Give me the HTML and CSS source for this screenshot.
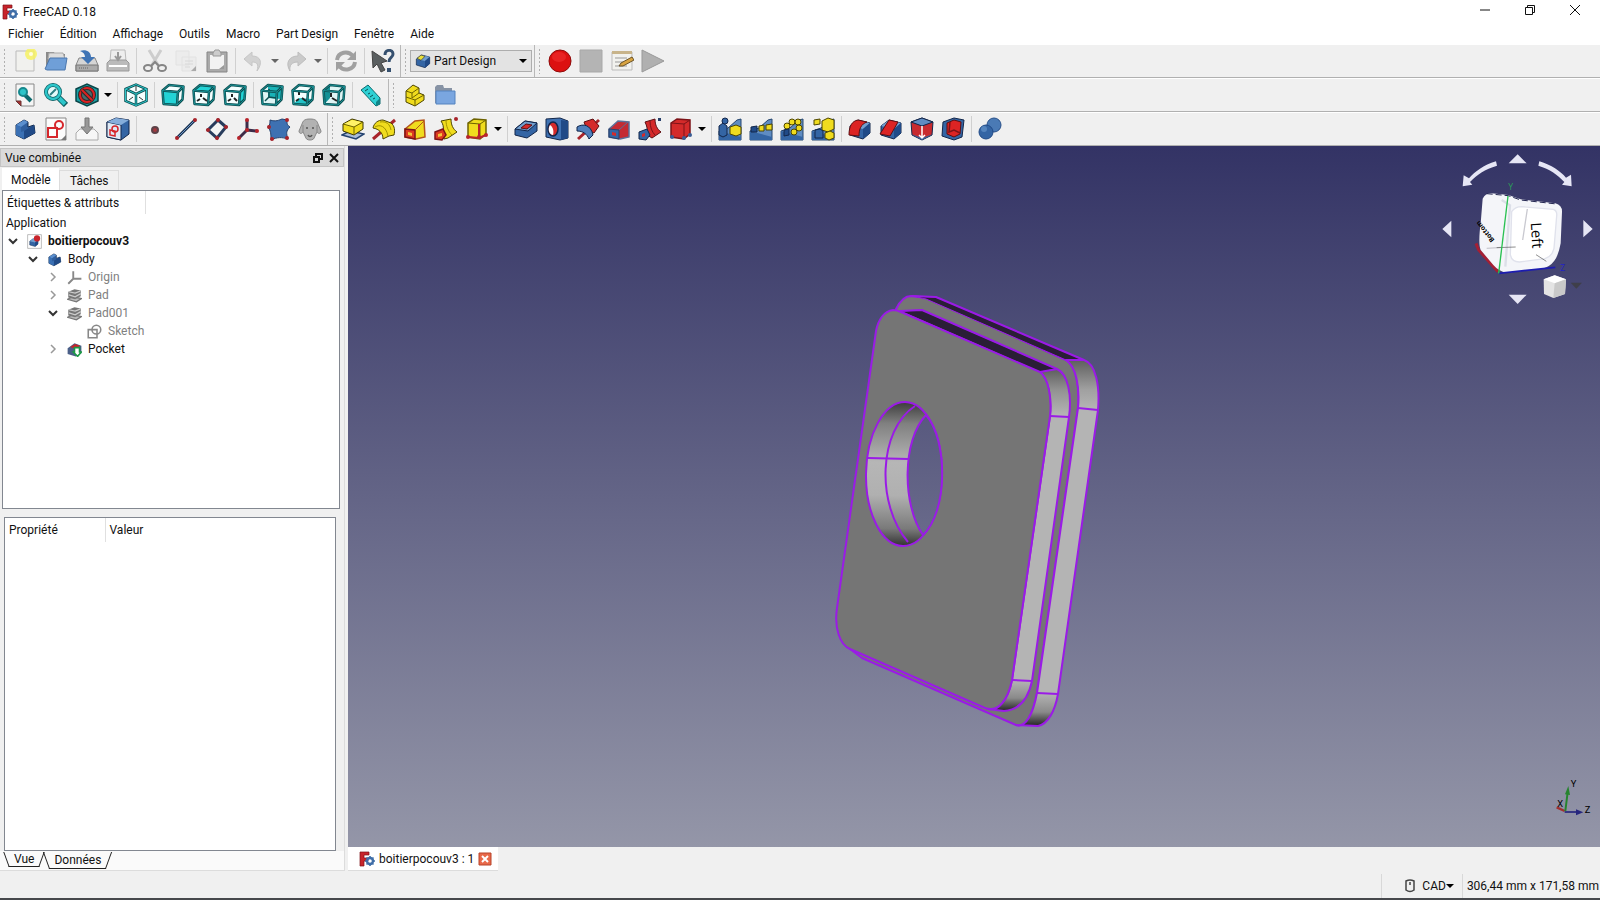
FILE: index.html
```html
<!DOCTYPE html>
<html lang="fr">

<head>
    <meta charset="UTF-8">
    <meta name="viewport" content="width=device-width, initial-scale=1.0">
    <title>FreeCAD 0.18</title>
    <link rel="stylesheet" href="styles.css">
</head>

<body>
    <!-- shared icon shapes -->
    <svg class="defs" width="0" height="0" aria-hidden="true">
        <symbol id="logo" viewBox="0 0 16 16">
            <path d="M1 1h9v3H5v3h4v3H5v5H1z" fill="#c8242b" stroke="#7c1318" stroke-width=".7" />
            <circle cx="11" cy="10" r="3" fill="none" stroke="#3f6ea8" stroke-width="2.4" />
            <path d="M11 5v2M11 13v2M6 10h2M14 10h2M7.500 6.500l1.500 1.500M13 12l1.500 1.500M14.500 6.500L13 8M9 12l-1.500 1.500" stroke="#3f6ea8" stroke-width="1.600" />
        </symbol>
        <symbol id="cube" viewBox="0 0 24 24">
            <g fill="none" stroke="#0c4f52" stroke-width="2.500" stroke-linejoin="round">
                <path d="M1.500 7.500L8 2l14.500 1.500-1 13L16 22 2.500 21zM1.500 7.500L17 9l5.500-5.500M17 9l-1 13" />
            </g>
            <path d="M1.500 7.500L8 2l14.500 1.500-1 13L16 22 2.500 21zM1.500 7.500L17 9l5.500-5.500M17 9l-1 13" fill="none" stroke="#1fa9ad" stroke-width=".7" />
        </symbol>
        <symbol id="body" viewBox="0 0 24 24">
            <path d="M3 8l8-5 4 2v5l6-2 1 8-11 6-8-4z" fill="#2f5f9f" stroke="#13294a" stroke-linejoin="round" />
            <path d="M3 8l8-5 4 2-7 5z" fill="#5b8fce" />
            <path d="M11 14l10-6 1 8-11 6z" fill="#204a87" />
            <path d="M3 8l5 2v5l3-1v8l-8-4z" fill="#3a70b4" />
        </symbol>
        <symbol id="pad" viewBox="0 0 24 24">
            <path d="M1 18l8-4 14 3-8 5z" fill="#a9bcd8" stroke="#23426f" stroke-width="1.500" />
            <path d="M2 7l9-5 11 3v7l-9 6-11-4z" fill="#f0dc1e" stroke="#3d3700" stroke-linejoin="round" />
            <path d="M3 7l8-4 9 2-7 5z" fill="#fff268" />
            <path d="M2 7l11 3 9-5M13 10v8" fill="none" stroke="#6d6200" />
        </symbol>
        <symbol id="padgrey" viewBox="0 0 24 24">
            <path d="M1 18l8-4 14 3-8 5z" fill="#bbb" stroke="#777" stroke-width="2" />
            <path d="M2 6l10-4 10 2v9l-9 5-11-3z" fill="#777" />
            <path d="M3 6l10 2 8-3M3 11l10 3 9-5" fill="none" stroke="#ccc" stroke-width="2" />
        </symbol>
        <symbol id="bluebox" viewBox="0 0 24 24">
            <path d="M2 9l8-6 12 3v10l-7 6-13-4z" fill="#3465a4" stroke="#12264a" stroke-linejoin="round" />
            <path d="M2 9l8-6 12 3-7 6z" fill="#729fcf" />
            <path d="M15 12l7-6v10l-7 6z" fill="#204a87" />
        </symbol>
        <symbol id="ramp" viewBox="0 0 24 24">
            <path d="M1 23V14l9-3L19 3l4-1v21z" fill="#5f8cc2" stroke="#26466f" />
            <path d="M1 14l22 6v3H1z" fill="#3465a4" />
        </symbol>
        <symbol id="down" viewBox="0 0 8 8">
            <path d="M0 2h8L4 6z" />
        </symbol>
        <symbol id="open" viewBox="0 0 12 12">
            <path d="M2 4l4 4 4-4" fill="none" stroke="#333" stroke-width="2" />
        </symbol>
        <symbol id="closed" viewBox="0 0 12 12">
            <path d="M4 2l4 4-4 4" fill="none" stroke="#999" stroke-width="1.500" />
        </symbol>
    </svg>

    <header class="titlebar">
        <svg class="logo" aria-hidden="true"><use href="#logo" /></svg>
        <h1>FreeCAD 0.18</h1>
        <div class="winbtns">
            <button aria-label="Réduire"><svg viewBox="0 0 12 12"><path d="M1 6h10" /></svg></button>
            <button aria-label="Restaurer"><svg viewBox="0 0 12 12"><path d="M1.500 3.500h7v7h-7zM3.500 3.500v-2h7v7h-2" /></svg></button>
            <button aria-label="Fermer"><svg viewBox="0 0 12 12"><path d="M1 1l10 10M11 1L1 11" /></svg></button>
        </div>
    </header>

    <nav class="menubar">
        <button>Fichier</button>
        <button>Édition</button>
        <button>Affichage</button>
        <button>Outils</button>
        <button>Macro</button>
        <button>Part Design</button>
        <button>Fenêtre</button>
        <button>Aide</button>
    </nav>

    <div class="toolrow">
        <div class="toolbar">
            <button class="tool" aria-label="Nouveau"><svg viewBox="0 0 24 24"><path d="M3 2h18v20H3z" fill="#f1f1ee" stroke="#bbb" /><circle cx="18" cy="5" r="6" fill="#f7f25a" opacity=".8" /><circle cx="18" cy="5" r="2" fill="#fffde0" /></svg></button>
            <button class="tool" aria-label="Ouvrir"><svg viewBox="0 0 24 24"><path d="M2 20V3h8l1 2h10v15z" fill="#8a8a8a" /><path d="M5 4h14l2 6H4z" fill="#ddd" stroke="#aaa" /><path d="M1 20l5-11h17l-2 12H3z" fill="#6f9fd8" stroke="#4a76ad" /></svg></button>
            <button class="tool" aria-label="Enregistrer"><svg viewBox="0 0 24 24"><path d="M4 9h16l3 7v6H1v-6z" fill="#d5d5d5" stroke="#888" /><path d="M1 16h22v6H1z" fill="#aaa" stroke="#777" /><path d="M5 2c6-2 11 1 11 6h4l-7 7-7-7h4c0-3-2-5-5-6z" fill="#3f74b5" /><path d="M4 19h10" stroke="#666" stroke-dasharray="1 1" /></svg></button>
            <button class="tool" aria-label="Imprimer"><svg viewBox="0 0 24 24"><path d="M5 1h14l1 11H4z" fill="#eee" stroke="#bbb" /><path d="M1 14l3-3h16l3 3v8H1z" fill="#bbb" stroke="#999" /><path d="M12 3v7M9 7l3 4 3-4" stroke="#999" stroke-width="2" fill="none" /><path d="M3 17h18" stroke="#fff" stroke-width="2" /></svg></button>
            <span class="sep"></span>
            <button class="tool" aria-label="Couper"><svg viewBox="0 0 24 24"><path d="M6 1l9 15M18 1L9 16" stroke="#cdcdcd" stroke-width="3" /><g fill="none" stroke="#858585" stroke-width="2"><ellipse cx="5" cy="19" rx="4" ry="3" /><ellipse cx="19" cy="19" rx="4" ry="3" /><path d="M8 17l4-4 4 4" /></g></svg></button>
            <button class="tool" aria-label="Copier"><svg viewBox="0 0 24 24"><path d="M2 2h13v14H2zM8 8h14v14H8z" fill="#ececec" stroke="#e2e2e2" /><path d="M11 12h8M11 15h8M11 18h5" stroke="#d8d8d8" /><path d="M22 17v5h-5z" fill="#aaa" /></svg></button>
            <button class="tool" aria-label="Coller"><svg viewBox="0 0 24 24"><path d="M2 3h20v20H2z" fill="#aaa" stroke="#858585" /><path d="M5 6h14v14H5z" fill="#f2f2f2" /><path d="M8 4l2-3h4l2 3v3H8z" fill="#ccc" stroke="#999" /><path d="M19 16v4h-5z" fill="#999" /></svg></button>
            <span class="sep"></span>
            <button class="tool" aria-label="Annuler"><svg viewBox="0 0 24 24"><path d="M2 10l8-7v4c9 0 11 7 5 15 2-7 0-9-5-9v4z" fill="#d2d2d2" stroke="#c6c6c6" /></svg></button>
            <button class="drop" aria-label="Liste des annulations"><svg class="grey"><use href="#down" /></svg></button>
            <button class="tool" aria-label="Rétablir"><svg viewBox="0 0 24 24"><path d="M21 10l-8-7v4c-9 0-13 7-8 15-1-6 2-9 8-9v4z" fill="#cacaca" stroke="#bdbdbd" /></svg></button>
            <button class="drop" aria-label="Liste des rétablissements"><svg class="grey"><use href="#down" /></svg></button>
            <span class="sep"></span>
            <button class="tool" aria-label="Rafraîchir"><svg viewBox="0 0 24 24"><g fill="none" stroke="#a0a0a0" stroke-width="4"><path d="M3 11c1-8 11-10 16-4M21 13c-1 8-11 10-16 4" /></g><path d="M22 2v9h-9zM2 22v-9h9z" fill="#a0a0a0" /></svg></button>
            <span class="sep"></span>
            <button class="tool" aria-label="Qu'est-ce que c'est ?"><svg viewBox="0 0 24 24"><path d="M1 2l15 10-6 2 4 7-4 2-4-8-4 4z" fill="#5a5f60" stroke="#444" /><path d="M14 6c0-6 8-6 8-1 0 4-4 3-4 8" fill="none" stroke="#35506f" stroke-width="3" /><path d="M16 19h4v4h-4z" fill="#35506f" /></svg></button>
        </div>
        <div class="toolbar">
            <label class="workbench" aria-label="Atelier">
                <svg class="wbicon" viewBox="0 0 24 24"><use href="#bluebox" /><path d="M3 8l6-5 6 2-6 6z" fill="#e8e03a" stroke="#333" /></svg>
                <select>
                    <option>Part Design</option>
                </select>
                <svg class="wbarrow"><use href="#down" /></svg>
            </label>
        </div>
        <div class="toolbar">
            <button class="tool" aria-label="Enregistrer une macro"><svg viewBox="0 0 24 24"><circle cx="12" cy="12" r="11" fill="#dc1010" stroke="#8f0b0b" /><ellipse cx="11" cy="8" rx="7" ry="5" fill="#f03030" opacity=".6" /></svg></button>
            <button class="tool" aria-label="Arrêter la macro"><svg viewBox="0 0 24 24"><path d="M1 1h22v22H1z" fill="#b4b4b4" stroke="#a8a8a8" /></svg></button>
            <button class="tool" aria-label="Macros"><svg viewBox="0 0 24 24"><path d="M2 3h20v18H2z" fill="#f2f2ee" stroke="#bbb" /><path d="M2 2h20v3H2z" fill="#c8b48a" /><path d="M5 9h12M5 13h8M5 17h12" stroke="#999" /><path d="M9 17l2-3 11-6 2 3-11 6z" fill="#d9a441" stroke="#6b5326" /></svg></button>
            <button class="tool" aria-label="Exécuter la macro"><svg viewBox="0 0 24 24"><path d="M1 1l22 11L1 23z" fill="#b0b0b0" stroke="#999" /></svg></button>
        </div>
    </div>

    <div class="toolrow">
        <div class="toolbar">
            <button class="tool" aria-label="Tout afficher"><svg viewBox="0 0 24 24"><path d="M3 1h18v22H8l-5-5z" fill="#f5f5f5" stroke="#888" /><path d="M3 18h5v5z" fill="#a33" stroke="#633" /><path d="M12 12l6 6" stroke="#0c6a6e" stroke-width="4" /><circle cx="10" cy="9" r="4" fill="#2cc5c9" stroke="#16888d" stroke-width="2" /></svg></button>
            <button class="tool" aria-label="Ajuster à la sélection"><svg viewBox="0 0 24 24"><path d="M14 14l8 8" stroke="#0c5c60" stroke-width="6" /><path d="M14 14l7 7" stroke="#2cc5c9" stroke-width="4" /><circle cx="9" cy="9" r="7" fill="#e4fbfb" stroke="#0c5c60" stroke-width="4" /><circle cx="9" cy="9" r="7" fill="none" stroke="#2cc5c9" stroke-width="2.500" /><path d="M6 12l6-6" stroke="#2b7e82" stroke-width="2" /></svg></button>
            <button class="tool" aria-label="Style de représentation"><svg viewBox="0 0 24 24"><path d="M1 6l11-5 11 5v12l-11 5-11-5z" fill="#1aa0a5" stroke="#0a4548" stroke-width="1.500" /><circle cx="12" cy="12" r="7" fill="#4c6a6d" stroke="#2a2a2a" stroke-width="4" /><circle cx="12" cy="12" r="7" fill="none" stroke="#d22" stroke-width="2" /><path d="M7 7l10 10" stroke="#2a2a2a" stroke-width="4" /><path d="M7 7l10 10" stroke="#d22" stroke-width="2" /></svg></button>
            <button class="drop" aria-label="Autres styles"><svg><use href="#down" /></svg></button>
            <span class="sep"></span>
            <button class="tool" aria-label="Axonométrique"><svg viewBox="0 0 24 24"><path d="M1.500 6L12 1.500 22.500 6v12L12 22.500 1.500 18z" fill="#f5ffff" /><path d="M1.500 6L12 1.500 22.500 6v12L12 22.500 1.500 18zM1.500 6L12 11l10.500-5M12 11v11.500" fill="none" stroke="#0c4f52" stroke-width="2.500" /><path d="M1.500 6L12 1.500 22.500 6v12L12 22.500 1.500 18zM1.500 6L12 11l10.500-5M12 11v11.500" fill="none" stroke="#2cc5c9" /><path d="M12 3v5M5 17l4-3M19 17l-4-3" stroke="#333" /></svg></button>
            <span class="sep"></span>
            <button class="tool" aria-label="Devant"><svg viewBox="0 0 24 24"><path d="M2 7l6-5 14 2-1 12-5 6z" fill="#f4ffff" /><path d="M1.500 7.500L17 9l-1 13-13.500-1z" fill="#23d3d6" /><use href="#cube" /></svg></button>
            <button class="tool" aria-label="Dessus"><svg viewBox="0 0 24 24"><path d="M2 7l15 2 5-5-1 12-5 6-14-1z" fill="#f4ffff" /><path d="M1.500 7.500L8 2l14.500 1.500L17 9z" fill="#23d3d6" /><path d="M5 18l3-2M9 14v-3M11 15l4 3" stroke="#222" stroke-width="2" /><use href="#cube" /></svg></button>
            <button class="tool" aria-label="Droite"><svg viewBox="0 0 24 24"><path d="M2 7l6-5 14 2-6 18-14-1z" fill="#f4ffff" /><path d="M17 9l5.500-5.500-1 13L16 22z" fill="#23d3d6" /><path d="M5 18l3-2M9 14v-3M11 15l3 3" stroke="#222" stroke-width="2" /><use href="#cube" /></svg></button>
            <span class="sep"></span>
            <button class="tool" aria-label="Derrière"><svg viewBox="0 0 24 24"><path d="M2 7l6-5 14 2-1 12-5 6-14-1z" fill="#dff5f5" /><path d="M8 2l14 2-1 12-13-1z" fill="#18b3b7" /><path d="M5 18l4-4V6M9 14l7 1" stroke="#0c4f52" stroke-width="1.500" fill="none" /><use href="#cube" /></svg></button>
            <button class="tool" aria-label="Dessous"><svg viewBox="0 0 24 24"><path d="M2 7l6-5 14 2-1 12-5 6-14-1z" fill="#f4ffff" /><path d="M2.500 21L8 15l13 1-5 6z" fill="#23c3c7" /><path d="M8 12V7M5 18l3-2M11 15l4 3" stroke="#222" stroke-width="2" /><use href="#cube" /></svg></button>
            <button class="tool" aria-label="Gauche"><svg viewBox="0 0 24 24"><path d="M2 7l6-5 14 2-1 12-5 6-14-1z" fill="#dff5f5" /><path d="M1.500 7.500L8 2v13l-5.500 6z" fill="#159196" /><path d="M9 14v-4M10 15l5 3" stroke="#222" stroke-width="2" /><use href="#cube" /></svg></button>
            <span class="sep"></span>
            <button class="tool" aria-label="Mesurer une distance"><svg viewBox="0 0 24 24"><path d="M2 7l7-5 12 13v6l-4 2z" fill="#2ed0d4" stroke="#0c6a6e" /><path d="M17 19v4l4-2v-6" fill="#128488" /><path d="M6 8l3-2M9 11l2-1M11 14l3-2M14 16l2-1" stroke="#0c4f52" /></svg></button>
        </div>
        <div class="toolbar">
            <button class="tool" aria-label="Créer une pièce"><svg viewBox="0 0 24 24"><path d="M4 8l7-6 6 3v5l5 2v5l-9 6-9-4z" fill="#f0dc1e" stroke="#4d4500" stroke-linejoin="round" /><path d="M4 8l6 2 7-5M10 10v5l7-5M4 14l9 3 9-5M13 17v6" fill="none" stroke="#6d6200" /></svg></button>
            <button class="tool" aria-label="Créer un groupe"><svg viewBox="0 0 24 24"><path d="M2 4l2-2h6l1 3h8v15H2z" fill="#8793a5" /><path d="M3 8h19v13H3z" fill="#7aa6e0" stroke="#5583bf" /></svg></button>
        </div>
    </div>

    <div class="toolrow">
        <div class="toolbar">
            <button class="tool" aria-label="Créer un corps"><svg><use href="#body" /></svg></button>
            <button class="tool" aria-label="Créer une esquisse"><svg viewBox="0 0 24 24"><path d="M2 1h20v22H2z" fill="#fbfbfb" stroke="#888" /><g fill="none" stroke="#d6262b" stroke-width="2"><path d="M4 11h9v9H4z" /><circle cx="15" cy="8" r="4" /></g><path d="M22 18v5h-5z" fill="#777" /></svg></button>
            <button class="tool" aria-label="Éditer l'esquisse"><svg viewBox="0 0 24 24"><path d="M5 12h14l4 4v7H1v-7z" fill="#f7f7f7" stroke="#aaa" /><path d="M10 1h4v9h4l-6 7-6-7h4z" fill="#999" stroke="#777" /></svg></button>
            <button class="tool" aria-label="Appliquer une esquisse"><svg viewBox="0 0 24 24"><path d="M1 5l9-4 13 2v14l-8 6L1 20z" fill="#3465a4" stroke="#12264a" /><path d="M1 5l14 3v15L1 20z" fill="#dfe9f5" stroke="#12264a" /><path d="M1 5l9-4 13 2-8 5z" fill="#86aedb" /><path d="M4 13l5 1v5l-5-1z" fill="none" stroke="#d6262b" stroke-width="1.500" /><circle cx="9" cy="12" r="3" fill="none" stroke="#d6262b" stroke-width="1.500" /></svg></button>
            <span class="sep"></span>
            <button class="tool" aria-label="Point de référence"><svg viewBox="0 0 24 24"><circle cx="12" cy="13" r="3" fill="#a03a40" stroke="#5d4248" stroke-width="2" /></svg></button>
            <button class="tool" aria-label="Ligne de référence"><svg viewBox="0 0 24 24"><path d="M3 21L21 3" stroke="#17304f" stroke-width="3" /><path d="M3 21L21 3" stroke="#6d97c8" /><circle cx="3" cy="21" r="2" fill="#a8242b" /><circle cx="21" cy="3" r="2" fill="#a8242b" /></svg></button>
            <button class="tool" aria-label="Plan de référence"><svg viewBox="0 0 24 24"><path d="M13 3l8 7-9 11-9-8z" fill="#f4f4f4" stroke="#283c5c" stroke-width="3" /><g fill="#a8242b"><circle cx="13" cy="3" r="2" /><circle cx="21" cy="10" r="2" /><circle cx="12" cy="21" r="2" /><circle cx="3" cy="13" r="2" /></g></svg></button>
            <button class="tool" aria-label="Système de coordonnées local"><svg viewBox="0 0 24 24"><path d="M11 13V3M11 13l10 1M11 13l-8 8" stroke="#3d2c48" stroke-width="3" /><g fill="#b8242b"><circle cx="11" cy="3" r="2" /><circle cx="21" cy="14" r="2" /><circle cx="3" cy="21" r="2" /><circle cx="11" cy="13" r="2" /></g></svg></button>
            <button class="tool" aria-label="Forme liée"><svg viewBox="0 0 24 24"><path d="M3 3c6 2 9 0 12-1l5 1c0 4 0 5 3 7-4 4-4 6-2 12-6-2-11-2-17 1 0-6 0-9-3-13 2-2 2-4 2-7z" fill="#3e71b2" stroke="#23426f" /><g fill="#a8242b"><circle cx="20" cy="3" r="2" /><circle cx="2" cy="10" r="2" /><circle cx="20" cy="21" r="2" /><circle cx="5" cy="22" r="2" /></g></svg></button>
            <button class="tool" aria-label="Cloner"><svg viewBox="0 0 24 24"><path d="M12 2c6 0 7 2 8 5l3 7c0 3-3 3-4 1l-2 4c-1 3-2 4-5 4s-4-1-5-4l-2-4c-1 2-4 2-4-1l3-7c1-3 2-5 8-5z" fill="#b2b2b2" stroke="#888" /><path d="M5 8v7M19 8v7" stroke="#888" /><path d="M9 10v2M15 10v2M10 18c1 2 3 2 4 0" stroke="#555" stroke-width="1.500" fill="none" /></svg></button>
        </div>
        <div class="toolbar">
            <button class="tool" aria-label="Protrusion"><svg><use href="#pad" /></svg></button>
            <button class="tool" aria-label="Révolution"><svg viewBox="0 0 24 24"><path d="M1 22L23 3" stroke="#a8242b" stroke-width="3" /><path d="M1 11c1-5 5-8 10-8l8 3c4 3 4 8 3 12l-5 1-6 3c0-6-4-10-10-11z" fill="#f0dc1e" stroke="#4d4500" /><path d="M3 10c5-3 11-1 13 9M8 5c6-1 10 2 11 8" fill="none" stroke="#a39300" /></svg></button>
            <button class="tool" aria-label="Lissage additif"><svg viewBox="0 0 24 24"><path d="M2 12l10-8 9-1 1 17-9 2-11-2z" fill="#f0dc1e" stroke="#b3541c" stroke-width="1.500" /><path d="M2 12l10 1v9l-10-2z" fill="#dc3a20" stroke="#7c1318" stroke-width="1.500" /><path d="M5 15l4 1v3l-4-1z" fill="#f4c43a" /><path d="M12 13l9-9" stroke="#b3541c" /></svg></button>
            <button class="tool" aria-label="Balayage additif"><svg viewBox="0 0 24 24"><path d="M7 4l10-2c0 6 2 10 6 13l-9 6-4 1-1-8c1-4 0-7-2-10z" fill="#f0dc1e" stroke="#4d4500" /><path d="M12 3c0 6 2 11 6 15" fill="none" stroke="#a39300" /><path d="M1 15l8-3 3 6-4 5-7-1z" fill="#dc3a20" stroke="#7c1318" stroke-width="1.500" /><path d="M4 17l4-1v3l-4 1z" fill="#f4c43a" /><circle cx="22" cy="2" r="2" fill="#a8242b" /></svg></button>
            <button class="tool" aria-label="Primitive additive"><svg viewBox="0 0 24 24"><path d="M3 6l6-4 12 1v14l-6 5-12-2z" fill="#f0dc1e" stroke="#6d6200" stroke-width="1.500" /><path d="M3 6l12 1 6-4M15 7v14" fill="none" stroke="#6d6200" /><path d="M14 7v13M3 20l11 1 7-3" stroke="#b8242b" stroke-width="2" fill="none" /><g fill="#b8242b"><circle cx="3" cy="20" r="2" /><circle cx="14" cy="20" r="2" /><circle cx="21" cy="18" r="2" /></g></svg></button>
            <button class="drop" aria-label="Autres primitives additives"><svg><use href="#down" /></svg></button>
            <span class="sep"></span>
            <button class="tool" aria-label="Cavité"><svg viewBox="0 0 24 24"><path d="M1 12l10-8 12 2v8L13 21 1 18z" fill="#3465a4" stroke="#12264a" stroke-linejoin="round" /><path d="M1 12l10-8 12 2-9 8z" fill="#729fcf" stroke="#12264a" /><path d="M7 11l5-4 6 1-5 4z" fill="#d42a2a" stroke="#5d0f12" /></svg></button>
            <button class="tool" aria-label="Perçage"><svg viewBox="0 0 24 24"><path d="M1 2l14-1 8 3v17l-8 2-14-3z" fill="#3f72b3" stroke="#12264a" /><path d="M16 3l7 1v17l-7 2z" fill="#204a87" /><ellipse cx="8" cy="12" rx="5" ry="7" fill="#d42a2a" stroke="#12264a" stroke-width="1.500" /><path d="M5 8c3 2 4 6 3 10-5-1-5-7-3-10z" fill="#fff" /></svg></button>
            <button class="tool" aria-label="Rainure"><svg viewBox="0 0 24 24"><path d="M2 22L23 3" stroke="#a8242b" stroke-width="3" /><path d="M8 5l9-3 6 7-5 7-7-3z" fill="#d42a2a" stroke="#5d0f12" /><path d="M1 10c6-4 14-2 16 8l-4 4c-2-5-6-8-12-8z" fill="#4f7fbb" stroke="#12264a" /></svg></button>
            <button class="tool" aria-label="Lissage soustractif"><svg viewBox="0 0 24 24"><path d="M2 12l9-8 11 1v15l-9 2-11-2z" fill="#c42a33" stroke="#5b6f98" stroke-width="1.500" /><path d="M2 12l10 1v9l-10-2z" fill="#3465a4" stroke="#28406b" /><path d="M5 15l4 1v3l-4-1z" fill="#d42a2a" /><path d="M12 13l9-8" stroke="#5b6f98" /></svg></button>
            <button class="tool" aria-label="Balayage soustractif"><svg viewBox="0 0 24 24"><path d="M7 5l10-3c0 6 2 10 6 13l-9 6-5-3c1-5 0-9-2-13z" fill="#d42a2a" stroke="#5d0f12" /><path d="M12 4c0 6 2 11 5 14" fill="none" stroke="#7c1318" /><path d="M1 15l8-3 3 6-4 5-7-1z" fill="#3465a4" stroke="#12264a" /><path d="M4 17l3-1v3l-3 1z" fill="#d42a2a" /><path d="M20 1h3v3h-3z" fill="#28406b" /></svg></button>
            <button class="tool" aria-label="Primitive soustractive"><svg viewBox="0 0 24 24"><path d="M2 6l6-4 13 1v14l-6 5-13-2z" fill="#d42a2a" stroke="#7c1318" stroke-width="1.500" /><path d="M2 6l13 1 6-4M15 7v14" fill="none" stroke="#7c1318" /><g fill="#3a5e95"><circle cx="3" cy="20" r="2" /><circle cx="15" cy="21" r="2" /><circle cx="21" cy="18" r="2" /></g></svg></button>
            <button class="drop" aria-label="Autres primitives soustractives"><svg><use href="#down" /></svg></button>
            <span class="sep"></span>
            <button class="tool" aria-label="Symétrie"><svg viewBox="0 0 24 24"><use href="#ramp" /><path d="M5 6l4 3v9l-4 2-4-2V9z" fill="#3465a4" stroke="#12264a" /><circle cx="7" cy="4" r="3" fill="#3465a4" stroke="#12264a" /><path d="M12 10l6-2 5 2v7l-5 2-6-2z" fill="#f0dc1e" stroke="#4d4500" /></svg></button>
            <button class="tool" aria-label="Répétition linéaire"><svg viewBox="0 0 24 24"><use href="#ramp" /><path d="M2 10l6-1v6H2z" fill="#204a87" stroke="#12264a" /><path d="M10 9l5-1v6h-5zM17 8l6-1v6h-6z" fill="#f0dc1e" stroke="#4d4500" /></svg></button>
            <button class="tool" aria-label="Répétition circulaire"><svg viewBox="0 0 24 24"><use href="#ramp" /><g fill="#f0dc1e" stroke="#4d4500"><circle cx="12" cy="5" r="3" /><circle cx="18" cy="5" r="3" /><circle cx="7" cy="9" r="3" /><circle cx="19" cy="11" r="3" /><circle cx="14" cy="15" r="3" /></g><path d="M4 13l5-1v6l-5 1z" fill="#204a87" stroke="#12264a" /></svg></button>
            <button class="tool" aria-label="Transformation multiple"><svg viewBox="0 0 24 24"><use href="#ramp" /><g fill="#f0dc1e" stroke="#4d4500"><path d="M11 4l6-3 6 2v9l-6 3-6-2z" /><path d="M3 3l6-1v5l-6 1zM14 16l5-2 4 2v5l-5 2-4-2z" /></g><path d="M4 13l5-1 3 2v7H4z" fill="#3465a4" stroke="#12264a" /></svg></button>
            <span class="sep"></span>
            <button class="tool" aria-label="Congé"><svg viewBox="0 0 24 24"><use href="#bluebox" /><path d="M1 18c0-9 3-14 9-15l9 2c-6 2-8 7-8 14z" fill="#dc2424" stroke="#5d0f12" /></svg></button>
            <button class="tool" aria-label="Chanfrein"><svg viewBox="0 0 24 24"><use href="#bluebox" /><path d="M1 17l9-14 9 2-8 14z" fill="#dc2424" stroke="#5d0f12" /></svg></button>
            <button class="tool" aria-label="Dépouille"><svg viewBox="0 0 24 24"><path d="M1 5l11-4 11 4-1 13-10 5-10-5z" fill="#c82a2f" stroke="#12264a" /><path d="M1 5l11-4 11 4-11 4z" fill="#5f8cc2" stroke="#12264a" /><path d="M1 17l11 4 11-4-11 6z" fill="#3465a4" /><path d="M12 9v12M9 18l3 3 3-3" stroke="#fff" stroke-width="1.500" fill="none" /></svg></button>
            <button class="tool" aria-label="Évidement"><svg viewBox="0 0 24 24"><path d="M2 5l11-4 10 2-2 17-8 3-12-4z" fill="#3465a4" stroke="#12264a" /><path d="M6 6l7-3 7 2-1 12-6 3-7-3z" fill="#dc2424" stroke="#5d0f12" /><path d="M9 5l-1 10 5-2 6 3" fill="none" stroke="#7c1318" stroke-width="1.500" /></svg></button>
            <span class="sep"></span>
            <button class="tool" aria-label="Opération booléenne"><svg viewBox="0 0 24 24"><circle cx="16" cy="8" r="7" fill="#4a7ab5" stroke="#28508a" /><circle cx="8" cy="15" r="7" fill="#3465a4" stroke="#204a87" /><circle cx="6" cy="12" r="3" fill="#6d9bd0" opacity=".6" /></svg></button>
        </div>
    </div>

    <main>
        <aside class="dock">
            <div class="docktitle">
                <h2>Vue combinée</h2>
                <button aria-label="Détacher"><svg viewBox="0 0 10 10"><path d="M1 4h5v5H1zM3 4V1h6v5H6" /></svg></button>
                <button aria-label="Fermer le panneau"><svg viewBox="0 0 10 10"><path d="M1 1l8 8M9 1L1 9" /></svg></button>
            </div>
            <div class="tabs" role="tablist">
                <button class="tab active" role="tab" aria-selected="true">Modèle</button>
                <button class="tab" role="tab" aria-selected="false">Tâches</button>
            </div>
            <section class="tree">
                <div class="treehead">Étiquettes &amp; attributs</div>
                <p class="app">Application</p>
                <ul>
                    <li>
                        <div class="item root"><button aria-label="Replier"><svg><use href="#open" /></svg></button><svg class="ico" viewBox="0 0 24 24"><path d="M1 1h22v22H1z" fill="#fff" stroke="#999" /><use href="#bluebox" x="3" y="5" width="16" height="17" /><circle cx="16" cy="7" r="5" fill="#c8242b" /></svg>boitierpocouv3</div>
                        <ul>
                            <li>
                                <div class="item"><button aria-label="Replier"><svg><use href="#open" /></svg></button><svg class="ico"><use href="#body" /></svg>Body</div>
                                <ul>
                                    <li><div class="item off"><button aria-label="Déplier"><svg><use href="#closed" /></svg></button><svg class="ico" viewBox="0 0 24 24"><path d="M10 2v12h13M10 14l-8 8" fill="none" stroke="#888" stroke-width="3" /></svg>Origin</div></li>
                                    <li><div class="item off"><button aria-label="Déplier"><svg><use href="#closed" /></svg></button><svg class="ico"><use href="#padgrey" /></svg>Pad</div></li>
                                    <li>
                                        <div class="item off"><button aria-label="Replier"><svg><use href="#open" /></svg></button><svg class="ico"><use href="#padgrey" /></svg>Pad001</div>
                                        <ul>
                                            <li><div class="item off leaf"><svg class="ico" viewBox="0 0 24 24"><g fill="none" stroke="#888" stroke-width="2.500"><path d="M2 9h14v13H2z" /><circle cx="15" cy="9" r="7" /></g></svg>Sketch</div></li>
                                        </ul>
                                    </li>
                                    <li><div class="item"><button aria-label="Déplier"><svg><use href="#closed" /></svg></button><svg class="ico" viewBox="0 0 24 24"><path d="M1 10l11-8 11 4v12l-9 5-13-4z" fill="#4a5f88" /><path d="M5 8l8-5 8 3-7 5z" fill="#c8242b" /><path d="M12 9h8v7h3l-6 7-7-7h2z" fill="#fff" stroke="#1c9a45" stroke-width="2.500" /></svg>Pocket</div></li>
                                </ul>
                            </li>
                        </ul>
                    </li>
                </ul>
            </section>
            <section class="props">
                <table>
                    <thead>
                        <tr>
                            <th>Propriété</th>
                            <th>Valeur</th>
                        </tr>
                    </thead>
                </table>
            </section>
            <div class="btabs" role="tablist">
                <button class="btab" role="tab" aria-selected="false">Vue</button>
                <button class="btab active" role="tab" aria-selected="true">Données</button>
            </div>
        </aside>

        <section class="mdi">
            <div class="viewport">
                <svg class="model" viewBox="348 146 1252 701">
                    <defs>
                        <linearGradient id="sky" gradientUnits="userSpaceOnUse" x1="0" y1="146" x2="0" y2="847">
                            <stop offset="0" stop-color="#333365" />
                            <stop offset="1" stop-color="#9496a8" />
                        </linearGradient>
                        <linearGradient id="side" gradientUnits="userSpaceOnUse" x1="0" y1="362" x2="0" y2="712">
                            <stop offset="0" stop-color="#4c4c4c" />
                            <stop offset=".08" stop-color="#929292" />
                            <stop offset=".15" stop-color="#b4b4b4" />
                            <stop offset=".91" stop-color="#b4b4b4" />
                            <stop offset=".96" stop-color="#8a8a8a" />
                            <stop offset="1" stop-color="#1c1c1c" />
                        </linearGradient>
                        <linearGradient id="side2" gradientUnits="userSpaceOnUse" x1="0" y1="352" x2="0" y2="727">
                            <stop offset="0" stop-color="#4c4c4c" />
                            <stop offset=".1" stop-color="#a0a0a0" />
                            <stop offset=".15" stop-color="#b4b4b4" />
                            <stop offset=".91" stop-color="#b4b4b4" />
                            <stop offset=".96" stop-color="#8a8a8a" />
                            <stop offset="1" stop-color="#1c1c1c" />
                        </linearGradient>
                        <linearGradient id="bore" x1="0" y1="0" x2="0" y2="1">
                            <stop offset="0" stop-color="#3c3c3c" />
                            <stop offset=".15" stop-color="#808080" />
                            <stop offset=".42" stop-color="#b6b6b6" />
                            <stop offset=".65" stop-color="#b0b0b0" />
                            <stop offset=".88" stop-color="#7a7a7a" />
                            <stop offset="1" stop-color="#333" />
                        </linearGradient>
                    </defs>
                    <g stroke="#9a1be6" stroke-width="2" stroke-linejoin="round">
                        <!-- rear plate -->
                        <path d="M896 309C900 301 905 296 911 296L928 298 1066 360C1076 366 1080 387 1078 408L1037 693C1033 714 1026 728 1016 725L862 658 850 649Z" fill="#757575" />
                        <path d="M912 296L936 297 1084 360 1066 360 926 299Z" fill="#2a1e36" stroke-width="1" />
                        <path d="M1066 360C1076 366 1080 387 1078 408L1037 693C1033 714 1026 728 1016 725L1038 726C1048 724 1055 711 1058 694L1098 410C1100 386 1096 364 1084 360Z" fill="url(#side2)" />
                        <path d="M912 296L936 297 1084 360" fill="none" />
                        <path d="M1078 408L1098 410M1037 693L1058 694" />
                        <!-- front plate -->
                        <path d="M900 311L922 310 1057 369 1040 372Z" fill="#2a1e36" stroke-width="1" />
                        <path d="M1040 372C1048 378 1052 397 1050 416L1012 680C1008 700 998 712 988 709L1004 711C1018 710 1028 700 1032 681L1069 417C1072 395 1068 374 1057 369Z" fill="url(#side)" />
                        <path d="M893 310C884 311 878 320 876 331L837 608C834 628 840 645 850 649L985 708C998 713 1008 700 1012 680L1050 416C1052 397 1048 378 1040 372L901 312Q897 310 893 310Z" fill="#757575" />
                        <path d="M1050 416L1069 417M1012 680L1032 681M900 311L922 310 1057 369" fill="none" />
                        <!-- bore -->
                        <g fill="none">
                            <ellipse cx="904" cy="474" rx="38" ry="72" fill="url(#bore)" transform="rotate(1 904 474)" />
                            <path d="M926 415C902 440 902 505 923 535C948 512 948 440 926 415Z" fill="url(#sky)" />
                            <path d="M915 406C878 430 876 505 908 542M868 458L909 459" />
                        </g>
                    </g>
                </svg>

                <svg class="navcube" viewBox="0 18 510 492">
                    <g fill="#e6e6f5">
                        <path d="M236 70L263 43 290 70zM236 464L263 492 290 464zM64 242V292L37 267zM460 240V292L488 267z" />
                        <path d="M198 64C160 75 135 95 117 115L101 106 98 139 127 134 120 126C140 104 165 88 201 77zM328 64C365 75 390 93 408 113L423 104 425 139 396 134 403 126C383 104 360 88 325 77z" />
                    </g>
                    <path d="M138 310L146 330 204 395" fill="none" stroke="#a51f34" stroke-width="9" />
                    <path d="M158 176Q166 160 184 160L235 165 272 178 376 190Q397 196 396 216L392 310Q386 345 373 362 360 380 336 386L230 398Q206 394 190 375L152 330Q144 310 152 250Z" fill="#f4f5f9" />
                    <path d="M245 215Q255 200 275 200L370 208Q382 212 380 228L372 325Q366 350 345 356L268 366Q246 366 241 345Z" fill="#fff" stroke="#e0e2ec" stroke-width="4" />
                    <path d="M215 180L240 196 226 380" stroke="#dcdfe8" stroke-width="7" fill="none" />
                    <path d="M170 161L235 167 272 180 380 192" stroke="#222550" stroke-width="3" stroke-dasharray="18 9" fill="none" />
                    <path d="M292 207L278 300M170 325L215 322" stroke="#c9c9d0" stroke-width="4" />
                    <path d="M200 323L257 321M318 344L349 364" stroke="#555" stroke-width="2" />
                    <text class="left" transform="translate(302 248) rotate(86)">Left</text>
                    <text class="bottom" transform="translate(194 300) rotate(232)">Bottom</text>
                    <path d="M207 400L376 382" stroke="#1c1cb0" stroke-width="5" />
                    <path d="M206 400L234 168" stroke="#29c152" stroke-width="4" />
                    <text class="ax" x="235" y="151" fill="#2a9e58">Y</text>
                    <text class="ax" x="391" y="392" fill="#2222c4">Z</text>
                    <path d="M341 418L374 406 408 418 405 462 370 474 342 462z" fill="#e4e4e4" />
                    <path d="M341 418L374 406 408 418 374 430z" fill="#fff" />
                    <path d="M374 430L408 418 405 462 370 474z" fill="#c9c9c9" />
                    <path d="M422 428H456L439 446z" fill="#3f3f4a" />
                </svg>

                <svg class="axes" viewBox="0 0 210 180">
                    <path d="M104 138L80 127" stroke="#a03030" stroke-width="7" />
                    <path d="M106 138L113 82" stroke="#26842e" stroke-width="6" />
                    <path d="M105 88L115 63 120 90z" fill="#26842e" />
                    <path d="M104 141H145" stroke="#26267e" stroke-width="5" />
                    <path d="M138 133L160 142 138 151z" fill="#26267e" />
                    <text x="122" y="65">Y</text>
                    <text x="82" y="126">X</text>
                    <text x="164" y="143">Z</text>
                </svg>
            </div>
            <div class="doctabs">
                <div class="doctab">
                    <svg class="logo" aria-hidden="true"><use href="#logo" /></svg>
                    <span>boitierpocouv3 : 1</span>
                    <button aria-label="Fermer le document"><svg viewBox="0 0 14 14"><path d="M1 1h12v12H1z" fill="#e8694a" stroke="#b8452a" /><path d="M4 4l6 6M10 4l-6 6" stroke="#fff" stroke-width="2" /></svg></button>
                </div>
            </div>
        </section>
    </main>

    <footer class="status">
        <button class="navstyle">
            <svg viewBox="0 0 12 14" class="mouse"><path d="M2 2q4-2 8 0v9q-4 3-8 0z" fill="none" stroke="#444" stroke-width="1.500" /><path d="M6 3v3" stroke="#444" stroke-width="1.500" /></svg>
            CAD<svg class="caret"><use href="#down" /></svg>
        </button>
        <span class="dims">306,44 mm x 171,58 mm</span>
    </footer>
</body>

</html>
```
FILE: styles.css
```css
* {
    box-sizing: border-box;
}

body {
    margin: 0;
    height: 100vh;
    display: flex;
    flex-direction: column;
    overflow: hidden;
    background-color: #f0f0f0;
    color: #111;
    font: 12px/18px Roboto, "Open Sans", sans-serif;
}

button {
    margin: 0;
    padding: 0;
    border: 0;
    background: none;
    color: inherit;
    font: inherit;
}

h1,
h2,
p,
ul {
    margin: 0;
    padding: 0;
    font-size: 12px;
    font-weight: normal;
    list-style: none;
}

svg {
    flex-shrink: 0;
}

.defs {
    position: absolute;
}

.logo {
    width: 16px;
    height: 16px;
}

/* title bar + menu */
.titlebar {
    display: flex;
    align-items: center;
    height: 23px;
    padding-left: 2px;
    gap: 5px;
    background-color: #fff;
}

.winbtns {
    display: flex;
    margin-left: auto;
    padding-right: 3px;
}

.winbtns button {
    width: 45px;
    height: 20px;
}

.winbtns svg {
    width: 12px;
    height: 12px;
    fill: none;
    stroke: #111;
}

.menubar {
    display: flex;
    height: 21px;
    padding-left: 8px;
    gap: 16px;
    background-color: #fff;
}

/* toolbars */
.toolrow {
    display: flex;
    height: 34px;
    border-top: 1px solid #fff;
    border-bottom: 1px solid #b0b0b0;
}

.toolbar {
    display: flex;
    align-items: center;
    padding-right: 2px;
    border-right: 1px solid #b8b8b8;
}

.toolbar:last-child {
    border-right: 0;
}

.toolbar::before {
    content: "";
    width: 3px;
    height: 26px;
    margin: 0 3px;
    background: radial-gradient(circle, #b0b0b0 1px, transparent 1px) 0 0 / 3px 4px;
}

.tool {
    display: flex;
    justify-content: center;
    width: 31px;
}

.tool svg {
    width: 24px;
    height: 24px;
}

.drop {
    display: flex;
    justify-content: center;
    width: 12px;
}

.drop svg {
    width: 8px;
    height: 8px;
}

.grey {
    fill: #666;
}

.sep {
    width: 1px;
    height: 26px;
    margin: 0 2px 0 3px;
    background-color: #d0d0d0;
}

.workbench {
    position: relative;
    display: flex;
    align-items: center;
}

.workbench select {
    width: 122px;
    height: 22px;
    padding: 0 0 0 23px;
    border: 1px solid #adadad;
    border-radius: 0;
    background-color: #e3e3e3;
    color: #111;
    font: inherit;
    appearance: none;
}

.wbicon {
    position: absolute;
    left: 5px;
    width: 16px;
    height: 16px;
}

.wbarrow {
    position: absolute;
    right: 5px;
    width: 8px;
    height: 8px;
}

/* left dock */
main {
    flex: 1;
    display: flex;
    min-height: 0;
}

.dock {
    display: flex;
    flex-direction: column;
    width: 345px;
    margin-right: 3px;
    border-right: 1px solid #dcdcdc;
    border-bottom: 1px solid #dcdcdc;
}

.docktitle {
    display: flex;
    align-items: center;
    height: 19px;
    margin-top: 2px;
    padding: 0 1px 0 4px;
    border: 1px solid #c4c4c4;
    background-color: #dadada;
}

.docktitle h2 {
    flex: 1;
}

.docktitle button {
    width: 16px;
    height: 16px;
}

.docktitle svg {
    display: block;
    width: 10px;
    height: 10px;
    margin: auto;
    fill: none;
    stroke: #111;
    stroke-width: 2;
}

.tabs {
    display: flex;
    align-items: flex-end;
    height: 23px;
    padding-left: 2px;
}

.tab {
    height: 20px;
    padding: 0 10px;
    border: 1px solid #dcdcdc;
    border-bottom: 0;
}

.tab.active {
    height: 22px;
    width: 57px;
    padding: 0 8px;
    border-color: #fff;
    background-color: #fff;
    text-align: left;
}

.tree,
.props {
    min-height: 0;
    border: 1px solid #828790;
    background-color: #fff;
}

.tree {
    flex: 21;
    margin: 0 4px 8px 2px;
}

.props {
    flex: 22;
    margin: 0 8px 0 4px;
}

.treehead {
    width: 143px;
    height: 23px;
    padding: 3px 0 0 4px;
    border-right: 1px solid #e0e0e0;
}

.app {
    padding-left: 3px;
}

.tree ul ul {
    padding-left: 20px;
}

.item {
    display: flex;
    align-items: center;
    height: 18px;
}

.item button {
    display: flex;
    width: 24px;
    padding-left: 4px;
}

.item button svg {
    width: 12px;
    height: 12px;
}

.ico {
    width: 15px;
    height: 15px;
    margin-right: 6px;
}

.item.root {
    font-weight: bold;
}

.item.off {
    color: #808080;
}

.item.leaf {
    padding-left: 24px;
}

.props table {
    width: 100%;
    border-collapse: collapse;
}

.props th {
    height: 24px;
    padding: 0 4px;
    font-weight: normal;
    text-align: left;
}

.props th:first-child {
    width: 100px;
    border-right: 1px solid #e0e0e0;
}

.btabs {
    display: flex;
    height: 19px;
    padding-left: 4px;
    background-color: #fafafa;
}

.btab {
    position: relative;
    height: 16px;
    padding: 0 10px;
    line-height: 16px;
}

.btab::before,
.btab::after {
    content: "";
    position: absolute;
    top: 1px;
    bottom: 0;
    width: 50%;
    border-bottom: 1px solid #222;
}

.btab::before {
    left: 2px;
    border-left: 1px solid #222;
    transform: skewX(20deg);
}

.btab::after {
    right: 2px;
    border-right: 1px solid #222;
    transform: skewX(-20deg);
}

.btab.active {
    height: 18px;
    line-height: 18px;
}

/* 3D view */
.mdi {
    flex: 1;
    display: flex;
    flex-direction: column;
    min-width: 0;
}

.viewport {
    position: relative;
    flex: 1;
    min-height: 0;
    background: linear-gradient(#333365, #9496a8);
}

.model {
    display: block;
    width: 100%;
    height: 100%;
}

.navcube {
    position: absolute;
    top: 0;
    right: 0;
    width: 170px;
    height: 164px;
}

.navcube text {
    font-family: "Open Sans", sans-serif;
}

.navcube .left {
    font-size: 44px;
}

.navcube .bottom {
    font-size: 20px;
    font-weight: bold;
}

.navcube .ax {
    font-size: 26px;
}

.axes {
    position: absolute;
    right: 0;
    bottom: 22px;
    width: 70px;
    height: 60px;
    font-size: 28px;
}

.doctabs {
    height: 24px;
}

.doctab {
    display: flex;
    align-items: center;
    gap: 4px;
    width: 150px;
    height: 24px;
    padding-left: 11px;
    border-bottom: 1px solid #dcdcdc;
    background-color: #fff;
}

.doctab button svg {
    display: block;
    width: 14px;
    height: 14px;
}

/* status bar */
.status {
    display: flex;
    justify-content: flex-end;
    height: 29px;
    padding-top: 3px;
    border-bottom: 2px solid #46484c;
}

.navstyle {
    display: flex;
    align-items: center;
    padding: 0 8px 0 22px;
    border-left: 1px solid #d8d8d8;
}

.mouse {
    width: 12px;
    height: 14px;
    margin-right: 6px;
}

.caret {
    width: 8px;
    height: 8px;
}

.dims {
    padding: 3px 1px 0 4px;
    border-left: 1px solid #d8d8d8;
}
```
